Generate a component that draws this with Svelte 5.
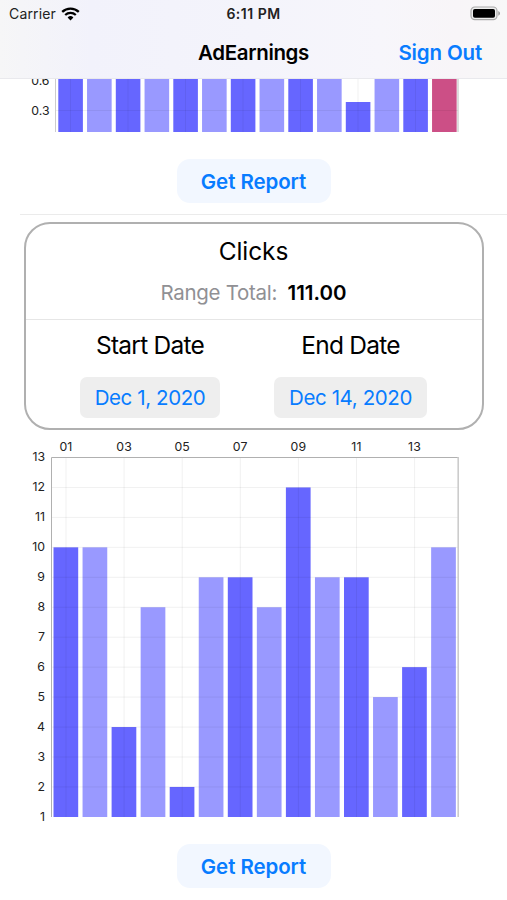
<script>
  const clicks = [10, 10, 4, 8, 2, 9, 9, 8, 12, 9, 9, 5, 6, 10]
  const earnings = [1.2, 1.4, 1.1, 1.3, 0.9, 1.2, 1, 1.5, 1.1, 1.2, 0.39, 1, 1.2, 1.3]

  const MIN = 1
  const MAX = 13
  const UNIT = 29.95
  const SLOT = 29.05
  const ticks = Array.from({ length: MAX - MIN + 1 }, (_, i) => MAX - i)

  const EARN_SLOT = 28.75

  function y(value) {
    return 17.5 + (MAX - value) * UNIT
  }

  function barColor(i) {
    return i % 2 === 0 ? "#6666ff" : "#9999ff"
  }

  function earnY(value) {
    return Math.max(0, 32 - (value - 0.3) * 100)
  }
</script>

<div class="screen">
  <header class="top">
    <div class="status">
      <div class="carrier">
        <span>Carrier</span>
        <svg width="19" height="14" viewBox="0 0 19 14" aria-hidden="true">
          <path d="M1.2 4.9A11.9 11.9 0 0 1 17.8 4.9" fill="none" stroke="#000" stroke-width="2.3" />
          <path d="M4.2 8A7.6 7.6 0 0 1 14.8 8" fill="none" stroke="#000" stroke-width="2.2" />
          <path d="M9.5 13.4L6.6 10.5A4.2 4.2 0 0 1 12.4 10.5Z" />
        </svg>
      </div>
      <span class="time">6:11 PM</span>
      <svg class="battery" width="32" height="15" viewBox="0 0 32 15" aria-hidden="true">
        <rect x="2" y="1" width="26" height="12.6" rx="3.8" fill="#eee" stroke="#aaa" stroke-width="1.2" />
        <rect x="4" y="3" width="22" height="8.8" rx="1.8" />
        <path d="M29.3 5V9.8Q31 8.9 31 7.4Q31 5.8 29.3 5Z" fill="#999" />
      </svg>
    </div>
    <nav class="nav">
      <h1>AdEarnings</h1>
      <button class="sign-out">Sign Out</button>
    </nav>
  </header>

  <main>
    <svg class="earnings" width="507" height="54" viewBox="0 0 507 54">
      <text x="49.5" y="6" class="tick">0.6</text>
      <text x="49.5" y="36" class="tick">0.3</text>
      <path d="M55.5 0V53" stroke="#ccc" />
      <path d="M458 0V53" stroke="#ddd" stroke-width="2" />
      {#each earnings as value, i}
        <rect
          x={58.3 + i * EARN_SLOT}
          y={earnY(value)}
          width="24.6"
          height={53 - earnY(value)}
          fill={i === 13 ? "#cc4f86" : barColor(i)}
        />
      {/each}
      <g class="grid">
        <path d="M56 31.5H458" />
        {#each earnings as _, i}
          {#if i % 2 === 0}
            <path d="M{70.5 + i * EARN_SLOT} 0V53" />
          {/if}
        {/each}
      </g>
    </svg>

    <button class="report first">Get Report</button>
    <hr class="separator" />

    <section class="card">
      <div class="summary">
        <h2>Clicks</h2>
        <p>Range Total: <strong>111.00</strong></p>
      </div>
      <div class="dates">
        <div class="date start">
          <span class="date-title">Start Date</span>
          <button>Dec 1, 2020</button>
        </div>
        <div class="date end">
          <span class="date-title">End Date</span>
          <button>Dec 14, 2020</button>
        </div>
      </div>
    </section>

    <svg class="clicks" width="507" height="386" viewBox="0 0 507 386">
      {#each ticks as tick}
        <text x="45" y={y(tick) + 3.6} class="tick">{tick}</text>
      {/each}
      {#each clicks as value, i}
        {#if i % 2 === 0}
          <text x={66 + i * SLOT} y="10.5" class="day">{String(i + 1).padStart(2, "0")}</text>
        {/if}
        <rect x={53.5 + i * SLOT} y={y(value)} width="24.7" height={377 - y(value)} fill={barColor(i)} />
      {/each}
      <g class="grid">
        {#each ticks.slice(1, -1) as tick}
          <path d="M52 {y(tick)}H458" />
        {/each}
        {#each clicks as _, i}
          {#if i % 2 === 0}
            <path d="M{66 + i * SLOT} 18V377" />
          {/if}
        {/each}
      </g>
      <path d="M51.5 377V17.5H458.5" fill="none" stroke="#b0b0b0" />
      <path d="M458.2 17V377" stroke="#ccc" stroke-width="1.6" />
    </svg>

    <button class="report last">Get Report</button>
  </main>
</div>

<style>
  :global(body) {
    background: #fff;
    overflow: hidden;
  }

  .screen {
    width: 507px;
    height: 900px;
    overflow: hidden;
    background: #fff;
    color: #000;
    font-family: Inter, "Liberation Sans", sans-serif;
  }

  button {
    border: none;
    padding: 0;
    font: inherit;
    color: #087cff;
    cursor: pointer;
  }

  h1,
  h2,
  p {
    margin: 0;
  }

  .top {
    height: 79px;
    box-sizing: border-box;
    border-bottom: 1px solid #e9e9ed;
    background: linear-gradient(90deg, #f6f6f7 0, #f2f2fb 18%, #f4f4fb 50%, #f7f6fb 75%, #f8f5f8 90%, #f8f8f8 100%);
  }

  .status {
    display: grid;
    grid-template-columns: 1fr auto 1fr;
    align-items: center;
    height: 27px;
    padding: 0 6px 0 9px;
    font-size: 14px;
    color: #222;
  }

  .carrier {
    display: flex;
    align-items: center;
    gap: 5px;
    letter-spacing: 0.15px;
  }

  .time {
    margin-right: 3px;
    font-size: 14px;
    font-weight: 600;
    letter-spacing: 0.5px;
  }

  .battery {
    justify-self: end;
  }

  .nav {
    display: grid;
    grid-template-columns: 1fr auto 1fr;
    align-items: center;
    height: 51px;
    padding-right: 25px;
    padding-left: 25px;
  }

  h1 {
    grid-column: 2;
    font-size: 20.5px;
    font-weight: 600;
    letter-spacing: -0.35px;
  }

  .sign-out {
    justify-self: end;
    background: none;
    font-size: 20.5px;
    font-weight: 600;
    letter-spacing: -0.15px;
  }

  main {
    display: flex;
    flex-direction: column;
    align-items: center;
  }

  .earnings,
  .clicks {
    display: block;
    flex-shrink: 0;
  }

  .tick,
  .day {
    font-size: 12.3px;
    fill: #222;
  }

  .tick {
    text-anchor: end;
  }

  .day {
    text-anchor: middle;
    letter-spacing: 0.2px;
  }

  .grid {
    stroke: #000;
    stroke-opacity: 0.06;
    fill: none;
  }

  .report {
    width: 154px;
    height: 44px;
    border-radius: 13px;
    background: #f2f7ff;
    font-size: 20.5px;
    font-weight: 600;
    letter-spacing: -0.08px;
  }

  .first {
    margin-top: 26px;
  }

  .last {
    margin-top: 18px;
  }

  .separator {
    align-self: stretch;
    margin: 11px 0 7px 20px;
    border: none;
    height: 1px;
    background: #ebebeb;
  }

  .card {
    width: 460px;
    height: 208px;
    box-sizing: border-box;
    border: 2px solid #b0b0b0;
    border-radius: 26px;
  }

  .summary {
    height: 96px;
    box-sizing: border-box;
    border-bottom: 1px solid #e6e6e6;
    text-align: center;
  }

  h2 {
    padding-top: 12px;
    font-size: 24.5px;
    font-weight: 400;
    line-height: 30px;
    letter-spacing: -0.1px;
  }

  p {
    margin-top: 14px;
    font-size: 20.5px;
    line-height: 25px;
    color: #909094;
    letter-spacing: -0.3px;
  }

  strong {
    margin-left: 5px;
    font-weight: 600;
    color: #000;
    letter-spacing: 0;
  }

  .dates {
    display: flex;
    justify-content: center;
    gap: 54px;
    padding-top: 10px;
  }

  .date {
    display: flex;
    flex-direction: column;
    align-items: center;
    gap: 17px;
  }

  .date-title {
    font-size: 24.5px;
    line-height: 30px;
    letter-spacing: -0.75px;
  }

  .date button {
    height: 41px;
    border-radius: 7px;
    background: #eee;
    font-size: 20.5px;
    letter-spacing: -0.4px;
  }

  .start button {
    width: 140px;
  }

  .end button {
    width: 153px;
  }

  .clicks {
    margin-top: 10px;
  }
</style>
